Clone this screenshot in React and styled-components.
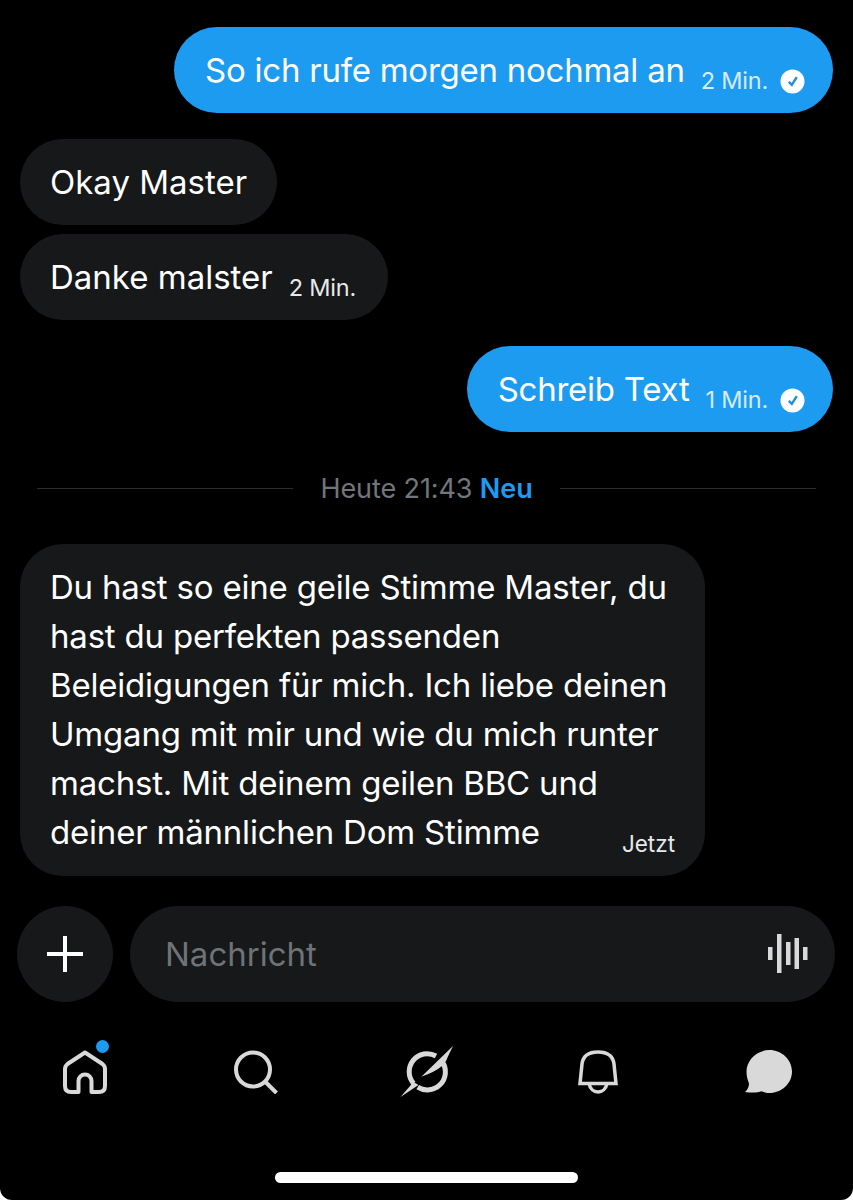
import React from "react";
import styled, { createGlobalStyle } from "styled-components";

const GlobalStyle = createGlobalStyle`
  html, body {
    margin: 0;
    padding: 0;
    background: #fff;
  }
  body {
    font-family: Inter, "Noto Sans", "Liberation Sans", sans-serif;
  }
`;

const Screen = styled.div`
  width: 853px;
  height: 1200px;
  background: #000;
  color: #fff;
  display: flex;
  flex-direction: column;
  overflow: hidden;
  border-radius: 0 0 12px 12px;
`;

const Messages = styled.div`
  display: flex;
  flex-direction: column;
  padding: ${(p) => p.$top || 0}px 20px 0;
`;

const Bubble = styled.div`
  align-self: ${(p) => (p.$mine ? "flex-end" : "flex-start")};
  background: ${(p) => (p.$mine ? "#1d9bf0" : "#17181a")};
  border-radius: 43px;
  height: 86px;
  box-sizing: border-box;
  padding: ${(p) => (p.$mine ? "0 28px 0 31px" : "0 30px")};
  margin-top: ${(p) => p.$top || 0}px;
  display: flex;
  align-items: center;
`;

const BubbleText = styled.span`
  font-size: 33px;
  letter-spacing: ${(p) => (p.$mine ? "-0.25px" : "0")};
  line-height: 49px;
  white-space: nowrap;
`;

const Time = styled.span`
  font-size: 23.5px;
  letter-spacing: -0.2px;
  margin-left: 16px;
  margin-right: ${(p) => (p.$mine ? 0 : 2)}px;
  margin-top: 20px;
  color: ${(p) => (p.$mine ? "#d5ecfc" : "#e7e9ea")};
  white-space: nowrap;
`;

const Check = styled.svg`
  width: 25px;
  height: 25px;
  margin-left: 12px;
  margin-top: 22px;
  flex-shrink: 0;
`;

const Divider = styled.div`
  display: flex;
  align-items: center;
  gap: 27px;
  margin: 35px 37px;
  font-size: 27px;
  letter-spacing: -0.1px;
  line-height: 40px;
  color: #71767b;
  &::before,
  &::after {
    content: "";
    flex: 1;
    height: 1px;
    background: #2b2e31;
  }
`;

const DividerLabel = styled.span`
  padding-top: 2px;
`;

const New = styled.b`
  color: #1d9bf0;
  font-weight: 600;
`;

const LongBubble = styled.div`
  position: relative;
  width: 685px;
  height: 332px;
  box-sizing: border-box;
  background: #17181a;
  border-radius: 43px;
  padding: 19px 0 0 30px;
  font-size: 33px;
  letter-spacing: -0.2px;
  line-height: 49px;
`;

const LongTime = styled.span`
  position: absolute;
  right: 30px;
  bottom: 19px;
  font-size: 22.5px;
  letter-spacing: 0;
  line-height: 27px;
  color: #e7e9ea;
`;

const Composer = styled.div`
  display: flex;
  align-items: center;
  gap: 17px;
  margin-top: 30px;
  padding: 0 18px 0 17px;
`;

const PlusButton = styled.div`
  width: 96px;
  height: 96px;
  border-radius: 50%;
  background: #17181a;
  display: flex;
  align-items: center;
  justify-content: center;
  flex-shrink: 0;
`;

const Input = styled.div`
  flex: 1;
  height: 96px;
  border-radius: 48px;
  background: #17181a;
  display: flex;
  align-items: center;
  justify-content: space-between;
  padding: 0 27px 0 35px;
  font-size: 33px;
  color: #6e7377;
`;

const TabBar = styled.nav`
  display: flex;
  justify-content: space-between;
  align-items: center;
  margin-top: 32px;
  padding: 0 56px 0 57px;
  height: 76px;
`;

const TabIcon = styled.div`
  position: relative;
  width: 56px;
  height: 76px;
  display: flex;
  align-items: center;
  justify-content: center;
`;

const Dot = styled.span`
  position: absolute;
  top: 6px;
  left: 39px;
  width: 13px;
  height: 13px;
  border-radius: 50%;
  background: #1d9bf0;
`;

const HomeIndicator = styled.div`
  width: 303px;
  height: 11px;
  border-radius: 6px;
  background: #fff;
  margin: 62px auto 0;
`;

const CheckIcon = () => (
  <Check viewBox="0 0 25 25">
    <circle cx="12.5" cy="12.5" r="12" fill="#fff" />
    <path d="M8.8 12.8l3 3 5-7.600" fill="none" stroke="#1d8fdc" strokeWidth="2.4" />
  </Check>
);

const App = () => {
  return (
    <>
      <GlobalStyle />
      <Screen>
        <Messages $top={27}>
          <Bubble $mine>
            <BubbleText $mine>So ich rufe morgen nochmal an</BubbleText>
            <Time $mine>2 Min.</Time>
            <CheckIcon />
          </Bubble>
          <Bubble $top={26}>
            <BubbleText>Okay Master</BubbleText>
          </Bubble>
          <Bubble $top={9}>
            <BubbleText>Danke malster</BubbleText>
            <Time>2 Min.</Time>
          </Bubble>
          <Bubble $mine $top={26}>
            <BubbleText $mine>Schreib Text</BubbleText>
            <Time $mine>1 Min.</Time>
            <CheckIcon />
          </Bubble>
        </Messages>
        <Divider>
          <DividerLabel>
            Heute 21:43 <New>Neu</New>
          </DividerLabel>
        </Divider>
        <Messages>
          <LongBubble>
            Du hast so eine geile Stimme Master, du
            <br />
            hast du perfekten passenden
            <br />
            Beleidigungen für mich. Ich liebe deinen
            <br />
            Umgang mit mir und wie du mich runter
            <br />
            machst. Mit deinem geilen BBC und
            <br />
            deiner männlichen Dom Stimme
            <LongTime>Jetzt</LongTime>
          </LongBubble>
        </Messages>
        <Composer>
          <PlusButton>
            <svg width="36" height="36" viewBox="0 0 36 36">
              <path d="M18 0v36M0 18h36" stroke="#fff" strokeWidth="4" />
            </svg>
          </PlusButton>
          <Input>
            <span>Nachricht</span>
            <svg width="40" height="40" viewBox="0 0 40 40" fill="#d9d9d9">
              <rect x="0" y="13" width="4.500" height="13" />
              <rect x="9" y="0" width="4.500" height="39" />
              <rect x="18" y="8" width="4.500" height="23" />
              <rect x="26.500" y="4" width="4.500" height="31" />
              <rect x="35" y="13" width="4.500" height="13" />
            </svg>
          </Input>
        </Composer>
        <TabBar>
          <TabIcon>
            <svg width="44" height="44" viewBox="0 0 44 44" fill="none" stroke="#d9d9d9" strokeWidth="4" strokeLinejoin="round">
              <path d="M22 2.500L4.500 14Q2 16 2 19V36Q2 42 8 42H15.500V31A6.500 6.500 0 0 1 28.500 31V42H36Q42 42 42 36V19Q42 16 39.500 14Z" />
            </svg>
            <Dot />
          </TabIcon>
          <TabIcon>
            <svg width="46" height="44" viewBox="0 0 46 44" fill="none" stroke="#d9d9d9" strokeWidth="4">
              <circle cx="20" cy="19.500" r="17" />
              <path d="M32.500 32l11 11" />
            </svg>
          </TabIcon>
          <TabIcon>
            <svg width="54" height="54" viewBox="0 0 54 54" fill="none">
              <path d="M36 11A18 18 0 0 0 13.600 38.500" stroke="#d9d9d9" strokeWidth="5" />
              <path d="M42.400 17A18 18 0 0 1 17.700 42.100" stroke="#d9d9d9" strokeWidth="5" />
              <path d="M53 1C50 7 48 11 46 16L42 21Q35 27 21.300 31.700Z" fill="#d9d9d9" />
              <path d="M.500 52L13.500 37L18.500 40Z" fill="#d9d9d9" />
            </svg>
          </TabIcon>
          <TabIcon>
            <svg width="40" height="44" viewBox="0 0 40 44" fill="none" stroke="#d9d9d9" strokeWidth="3.500" strokeLinejoin="miter">
              <path d="M2 33.500L4 14C5 6 11 2 20 2S35 6 36 14L38 33.500Z" />
              <path d="M11 33.500C12 39 16 42 20 42S28 39 29 33.500" />
            </svg>
          </TabIcon>
          <TabIcon>
            <svg width="48" height="44" viewBox="0 0 48 44" fill="#d9d9d9">
              <path d="M24.500 0C36.500 0 47 9.500 47 21.500S36.500 43 24.500 43c-3.500 0-6-.800-8-1.800-3 1.500-10 1.800-16.500.800 2.500-2 4-5 4-8.500C2.500 29.500 1.500 26 1.500 21.500 1.500 9.500 12.500 0 24.500 0z" />
            </svg>
          </TabIcon>
        </TabBar>
        <HomeIndicator />
      </Screen>
    </>
  );
};

export default App;
